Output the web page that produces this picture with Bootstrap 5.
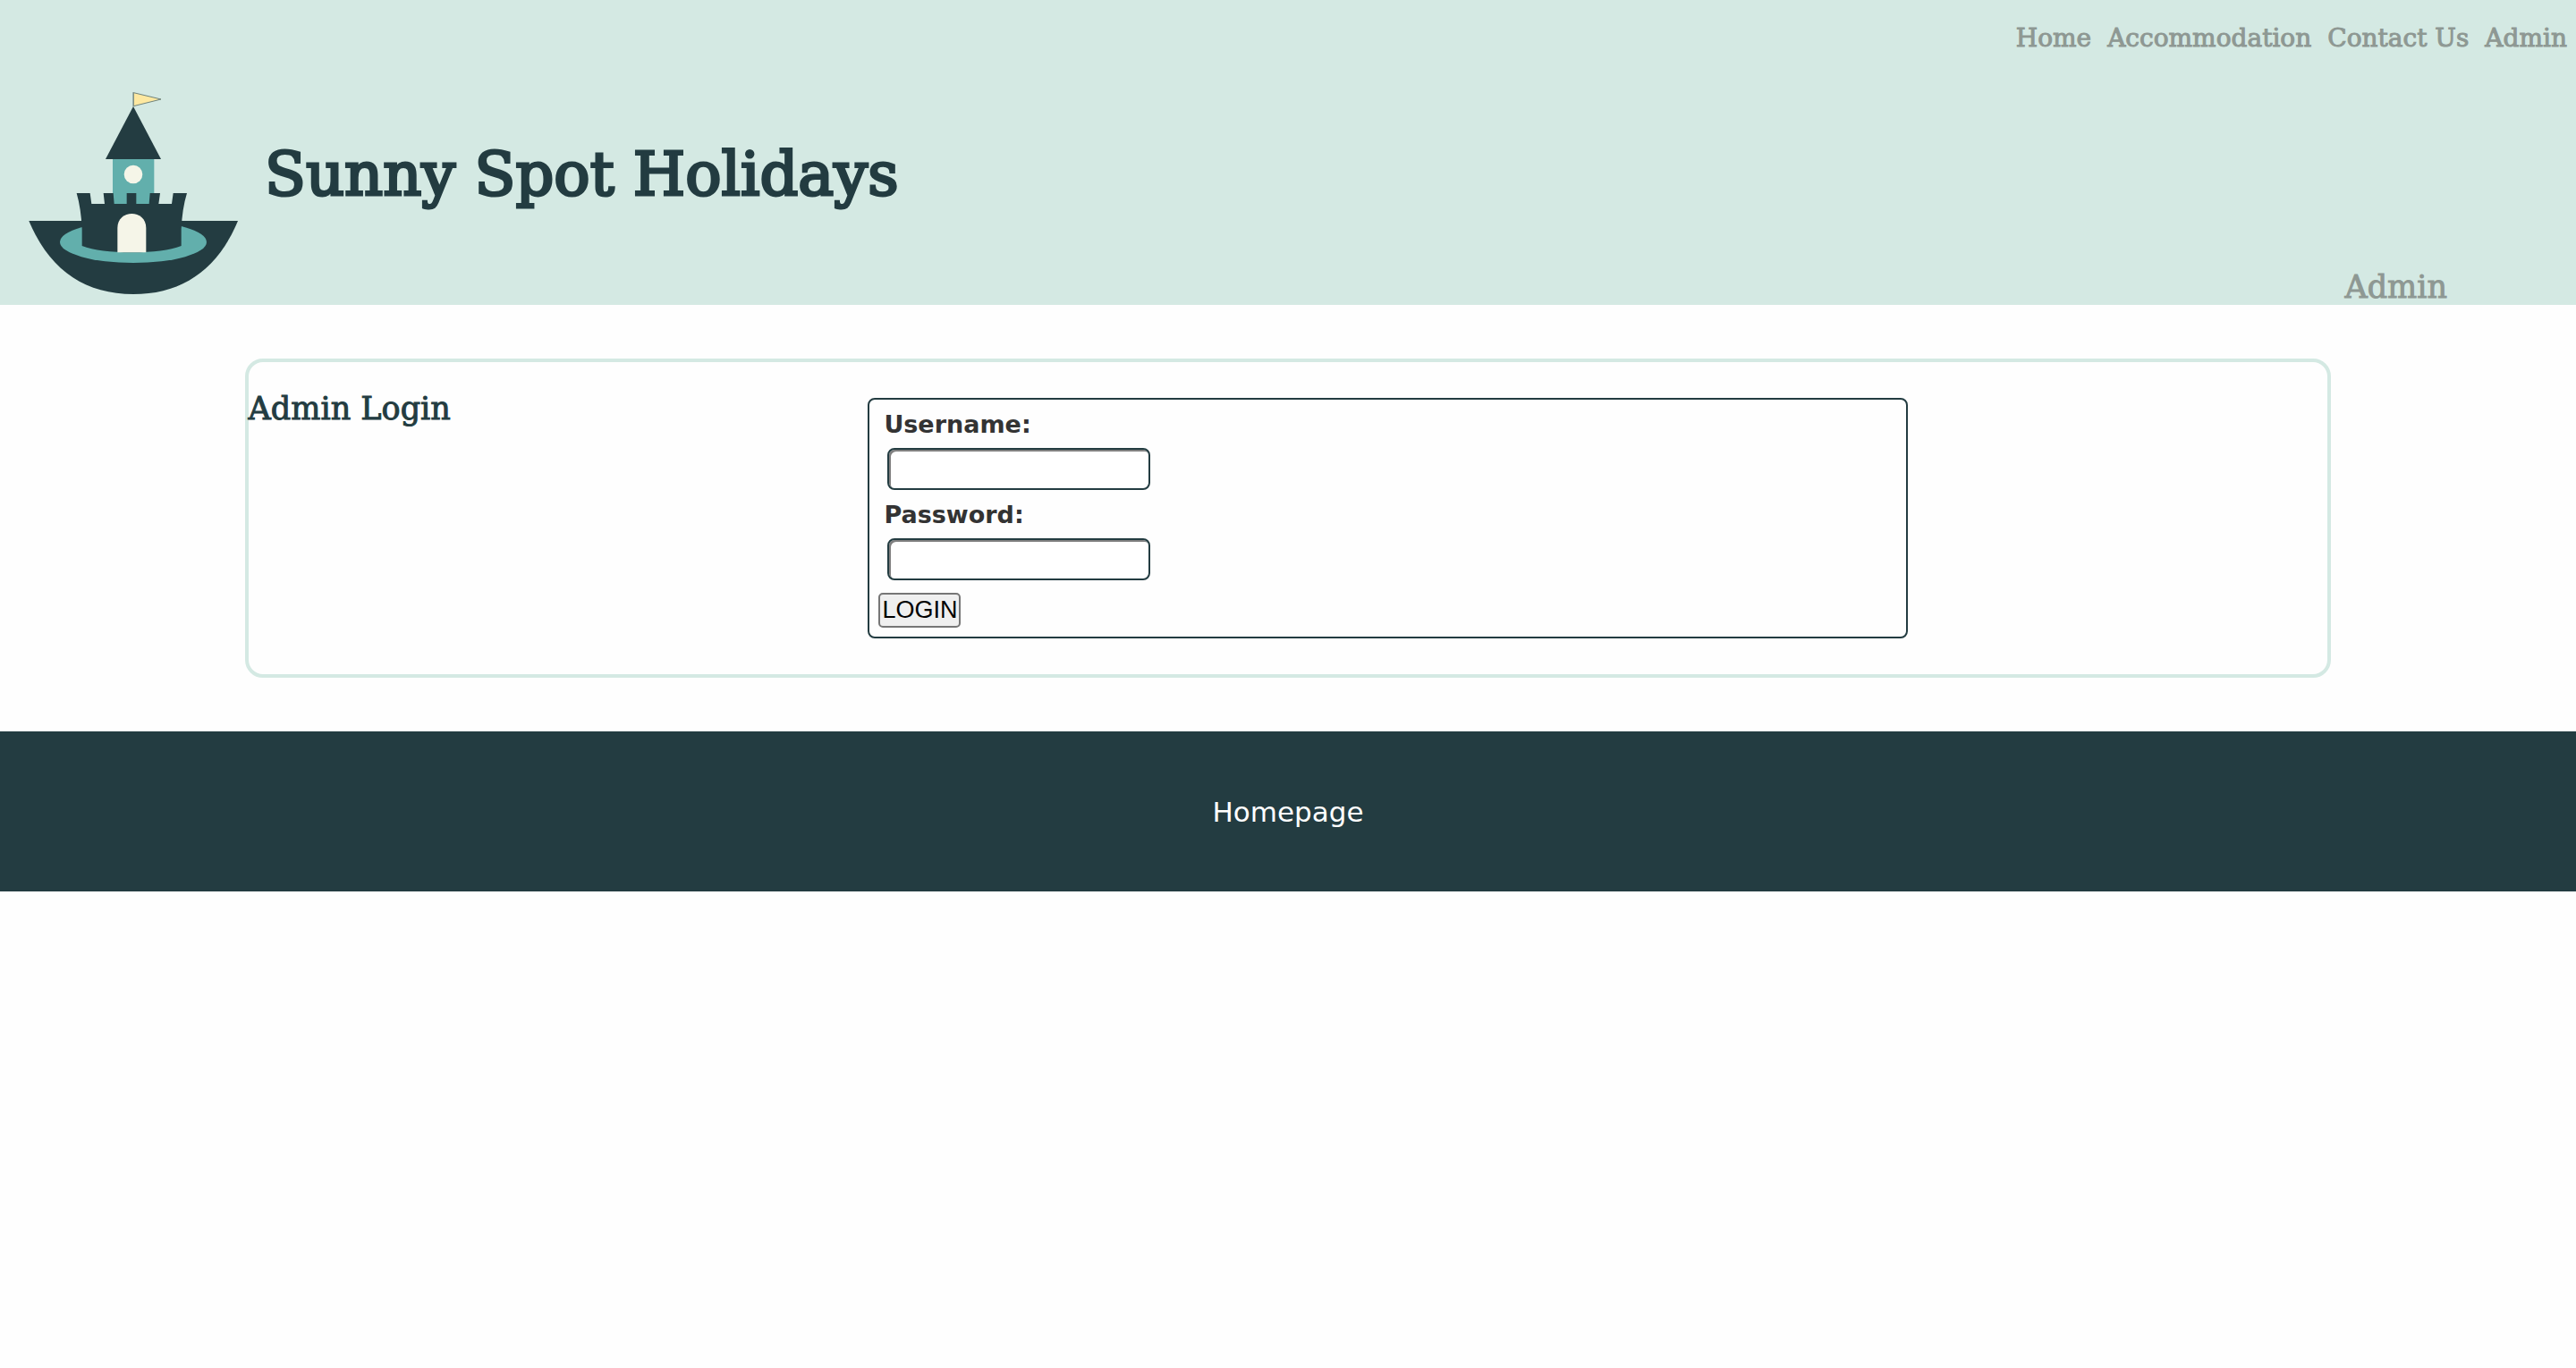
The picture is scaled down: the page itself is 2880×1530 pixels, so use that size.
<!DOCTYPE html>
<html lang="en">
<head>
<meta charset="utf-8">
<meta name="viewport" content="width=device-width, initial-scale=1">
<title>Sunny Spot Holidays</title>
<link href="https://cdn.jsdelivr.net/npm/bootstrap@5.3.0/dist/css/bootstrap.min.css" rel="stylesheet">
<style>
  :root { --mint: #d4e9e3; --pine: #233c41; --stone: #8e9893; }
  body { background: #fefefe; color: #333; font-family: Verdana, "DejaVu Sans", sans-serif; }
  /* a thin stroke gives the slab face a medium weight */
  .site-head, .login-title { font-family: "DejaVu Serif", serif; font-weight: 400; -webkit-text-stroke: 1px currentColor; }
  .site-head { background: var(--mint); }
  .site-nav { gap: 18px; padding: 25px 10px 23px; font-size: 28px; line-height: 36px; }
  .site-nav a { color: var(--stone); }
  .brand-row { padding: 16px 5% 0 30px; }
  .brand { gap: 26px; padding-bottom: 11px; }
  .brand svg { width: 240px; height: 230px; }
  .brand h1 { color: var(--pine); font-size: 67px; line-height: 88px; font-weight: 400; padding-bottom: 40px; -webkit-text-stroke: 3px currentColor; }
  .page-name { color: var(--stone); font-size: 35px; line-height: 40px; }
  .login-panel { width: 81%; margin: 60px auto; border: 4px solid var(--mint); border-radius: 20px; padding: 32px 0 40px; }
  .login-title { width: 29.8%; color: var(--pine); font-size: 35px; line-height: 40px; }
  .login-form { width: 50%; border: 2px solid var(--pine); border-radius: 8px; padding: 10px; }
  .login-form label { font-size: 27px; line-height: 36px; font-weight: 700; padding-left: 6px; }
  .login-form input { width: 294px; height: 47px; margin: 8px 10px 10px; padding: 4px 10px; font-size: 26px;
    background: #fff; border: 2px solid var(--pine); border-radius: 8px; box-shadow: inset 2px 2px 0 #808080; }
  .login-form button { margin-top: 14px; padding: 0 2px; font: 27px/35px "Liberation Sans", Arial, sans-serif; color: #000;
    background: #efefef; border: 2px solid #767676; border-radius: 5px; }
  .site-foot { background: var(--pine); padding: 68px 0 66px; font-size: 31px; line-height: 45px; }
</style>
</head>
<body>
<header class="site-head">
  <nav class="site-nav d-flex justify-content-end" aria-label="Main">
    <a class="text-decoration-none" href="#">Home</a>
    <a class="text-decoration-none" href="#">Accommodation</a>
    <a class="text-decoration-none" href="#">Contact Us</a>
    <a class="text-decoration-none" href="#">Admin</a>
  </nav>
  <div class="brand-row d-flex justify-content-between align-items-end">
    <div class="brand d-flex align-items-center">
      <svg viewBox="30 30 720 690" aria-hidden="true">
        <path d="M37 471H738C670 635 550 717 387 717S105 635 37 471Z" fill="#233c41"/>
        <ellipse cx="387" cy="542" rx="246" ry="70" fill="#62afac"/>
        <path d="M318 255H457V425H318Z" fill="#62afac"/>
        <path d="M387 87 480 264H294Z" fill="#233c41"/>
        <path d="M387 39V88" stroke="#7b8c88" stroke-width="3"/>
        <path d="M388 41 480 63 388 86Z" fill="#fde8a0" stroke="#6f837b" stroke-width="3"/>
        <circle cx="387" cy="315" r="31" fill="#f5f5e8"/>
        <path d="M197 378H242L247 414H291L287 378H320L323 414H365V378H397V414H440L443 378H477L472 414H516L521 378H567Q551 430 548 500V555Q490 577 382 577T215 555V500Q212 430 197 378Z" fill="#233c41"/>
        <path d="M334 577V495C334 431 430 431 430 495V577Z" fill="#f5f5e8"/>
      </svg>
      <h1 class="m-0">Sunny Spot Holidays</h1>
    </div>
    <div class="page-name">Admin</div>
  </div>
</header>
<main>
  <section class="login-panel d-flex align-items-start">
    <h2 class="login-title m-0">Admin Login</h2>
    <form class="login-form mt-2">
      <label class="d-block" for="username">Username:</label>
      <input class="d-block" id="username" type="text">
      <label class="d-block" for="password">Password:</label>
      <input class="d-block" id="password" type="password">
      <button class="d-block" type="button">LOGIN</button>
    </form>
  </section>
</main>
<footer class="site-foot text-center"><a class="text-white text-decoration-none" href="#">Homepage</a></footer>
<script src="https://cdn.jsdelivr.net/npm/bootstrap@5.3.0/dist/js/bootstrap.bundle.min.js"></script>
</body>
</html>
